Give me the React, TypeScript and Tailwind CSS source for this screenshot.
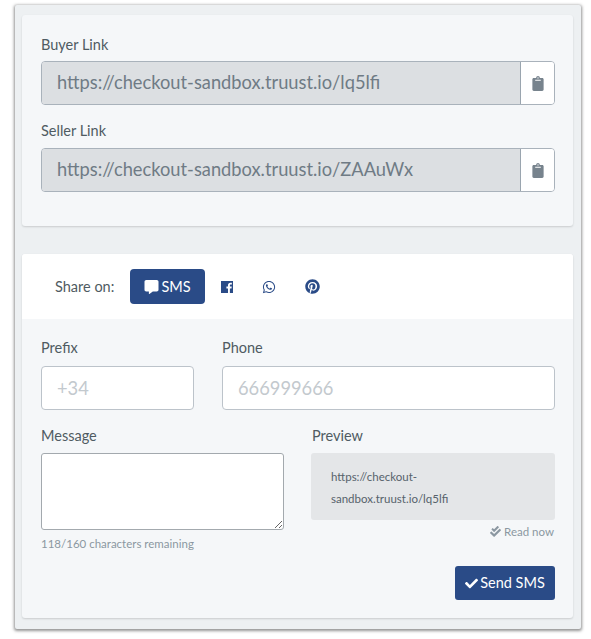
import { FaCheck, FaCheckDouble, FaClipboard, FaCommentAlt, FaPinterest, FaWhatsapp } from 'react-icons/fa';

const links = [
  { label: 'Buyer Link', url: 'https://checkout-sandbox.truust.io/lq5lfi', labelClass: 'mb-[6px]' },
  { label: 'Seller Link', url: 'https://checkout-sandbox.truust.io/ZAAuWx', labelClass: 'mb-[7px]' },
];

function FacebookIcon() {
  return (
    <svg viewBox="0 0 14 14" className="ml-[15px] w-[14px] h-[14px] text-[#2a4b87]">
      <path
        fill="currentColor"
        d="M1 1h12v12H9.9V8.4h1.6l.25-1.9H9.9V5.3c0-.55.15-.9.95-.9h1V2.75c-.2 0-.8-.08-1.45-.08-1.45 0-2.4.88-2.4 2.45v1.38H6.4v1.9H8V13H1z"
      />
    </svg>
  );
}

export default function App() {
  return (
    <div className="min-h-[639px] bg-white pt-[5px] pl-[15px] pr-[10px] text-[#4f5b62] font-['Lato',sans-serif]">
      <div className="h-[624px] bg-[#edf0f2] rounded-[2px] pl-[7px] pr-[8px] pt-[10px] shadow-[0_1px_3px_1px_rgba(60,60,60,0.55)]">
        {/* Links card */}
        <div className="h-[211px] bg-[#f5f7f9] rounded-[3px] pl-[19px] pr-[18px] pt-[20px] shadow-[0_1px_2px_rgba(0,0,0,0.15)]">
          {links.map((link) => (
            <div key={link.label} className="mb-[16px]">
              <div className={`h-[20px] ${link.labelClass} text-[14.5px] leading-[20px]`}>{link.label}</div>
              <div className="flex h-[44px] rounded-[4px] border border-[#a9b2bb] overflow-hidden">
                <div className="flex-1 flex items-center bg-[#dcdfe2] pl-[15px] text-[18.3px] text-[#6f7b85]">{link.url}</div>
                <div className="w-[34px] flex items-center justify-center bg-white border-l border-[#9aa5af]">
                  <FaClipboard className="w-[12px] h-[15px] text-[#77838d]" />
                </div>
              </div>
            </div>
          ))}
        </div>

        {/* SMS card */}
        <div className="mt-[28px] h-[364px] bg-[#f5f7f9] rounded-[3px] shadow-[0_1px_2px_rgba(0,0,0,0.15)]">
          <div className="h-[65px] bg-white rounded-t-[3px] flex items-center pl-[33px]">
            <span className="w-[75px] text-[14.5px]">Share on:</span>
            <div className="w-[75px] h-[35px] flex items-center justify-center gap-[2px] bg-[#2a4b87] rounded-[4px] text-white text-[14.5px]">
              <FaCommentAlt className="w-[15px] h-[14px] mt-[1px]" />
              SMS
            </div>
            <FacebookIcon />
            <FaWhatsapp className="ml-[28px] w-[14px] h-[14px] text-[#2a4b87]" />
            <FaPinterest className="ml-[29px] w-[15px] h-[15px] text-[#2a4b87]" />
          </div>

          <div className="pl-[19px] pr-[18px] pt-[19px]">
            <div className="flex gap-[28px]">
              <div className="w-[153px]">
                <div className="h-[20px] mb-[8px] text-[14.5px] leading-[20px]">Prefix</div>
                <div className="h-[44px] flex items-center pl-[15px] pt-[1px] bg-white border border-[#bcc3ca] rounded-[4px] text-[18.3px] text-[#c3c9ce]">+34</div>
              </div>
              <div className="flex-1">
                <div className="h-[20px] mb-[8px] text-[14.5px] leading-[20px]">Phone</div>
                <div className="h-[44px] flex items-center pl-[15px] pt-[1px] bg-white border border-[#bcc3ca] rounded-[4px] text-[18.3px] text-[#c3c9ce]">666999666</div>
              </div>
            </div>

            <div className="flex gap-[27px] mt-[16px]">
              <div className="w-[243px]">
                <div className="h-[20px] mb-[7px] text-[14.5px] leading-[20px]">Message</div>
                <textarea className="block w-full h-[77px] bg-white border border-[#a3a9ae] rounded-[3px]" />
                <div className="mt-[6px] text-[11.5px] leading-[15px] text-[#8b97a1]">118/160 characters remaining</div>
              </div>
              <div className="flex-1">
                <div className="h-[20px] mb-[7px] pl-[1px] text-[14.5px] leading-[20px]">Preview</div>
                <div className="h-[67px] bg-[#e4e6e8] rounded-[3px] pl-[20px] pt-[13px] pr-[40px] text-[11.5px] leading-[22px] text-[#56626b]">
                  https://checkout-sandbox.truust.io/lq5lfi
                </div>
                <div className="mt-[4px] pr-[1px] flex items-center justify-end gap-[3px] text-[11.5px] leading-[15px] text-[#8b97a1]">
                  <FaCheckDouble className="w-[11px] h-[11px]" />
                  Read now
                </div>
                <div className="mt-[27px] flex justify-end">
                  <div className="w-[100px] h-[34px] flex items-center justify-center gap-[2px] bg-[#2a4b87] rounded-[3px] text-white text-[14.5px]">
                    <FaCheck className="w-[13px] h-[13px]" />
                    Send SMS
                  </div>
                </div>
              </div>
            </div>
          </div>
        </div>
      </div>
    </div>
  );
}
